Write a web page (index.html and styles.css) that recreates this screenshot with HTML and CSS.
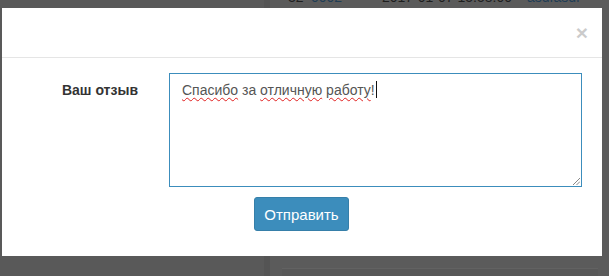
FILE: index.html
```html
<!DOCTYPE html>
<html lang="ru">
<head>
    <meta charset="UTF-8">
    <meta name="viewport" content="width=device-width, initial-scale=1.0">
    <title>Отзыв</title>
    <link rel="stylesheet" href="styles.css">
</head>
<body>
    <div class="page">
        <aside class="sidebar"></aside>
        <div class="divider"></div>
        <main class="content">
            <div class="table-row">
                <span class="cell num">32</span>
                <span class="cell link">0002</span>
                <span class="cell date">2017-01-07 15:58:00</span>
                <span class="cell link">asdfasdf</span>
            </div>
            <div class="panel"></div>
        </main>
    </div>

    <div class="modal">
        <div class="modal-header">
            <button class="close" type="button">&times;</button>
        </div>
        <form class="modal-body">
            <label class="form-label">Ваш отзыв</label>
            <div class="field">
                <div class="textarea"><span class="typo">Спасибо</span> за <span class="typo">отличную</span> <span class="typo">работу</span>!<span class="caret"></span>
                    <svg class="resize" width="7" height="7" viewBox="0 0 7 7">
                        <line x1="0" y1="7" x2="7" y2="0" stroke="#888" stroke-width="1"/>
                        <line x1="3.5" y1="7" x2="7" y2="3.5" stroke="#888" stroke-width="1"/>
                    </svg>
                </div>
                <button class="btn-primary" type="button">Отправить</button>
            </div>
        </form>
    </div>
</body>
</html>
```

FILE: styles.css
```css
* {
    margin: 0;
    padding: 0;
    box-sizing: border-box;
}
body {
    font-family: "Liberation Sans", Arial, sans-serif;
    font-size: 14px;
    line-height: 20px;
    color: #333;
    background-color: #5a5a5a;
    overflow: hidden;
}
.page {
    display: grid;
    grid-template-columns: 264px 6px 1fr;
    height: 276px;
}
.sidebar {
    background-color: #595959;
}
.divider {
    background-color: #545454;
}
.content {
    background-color: #5b5b5b;
    display: flex;
    flex-direction: column;
    justify-content: space-between;
    padding: 0 11px 0 12px;
}
.table-row {
    display: flex;
    margin-top: -13px;
    padding-left: 6px;
    font-size: 14px;
    color: #1e1e1e;
}
.cell.num {
    width: 23px;
}
.cell.link {
    color: #1f3d55;
}
.cell.link:nth-child(2) {
    width: 71px;
}
.cell.date {
    width: 145px;
}
.panel {
    height: 8px;
    border-top: 1px solid #626262;
    background-color: #585858;
}
.modal {
    position: absolute;
    left: 2px;
    top: 8px;
    width: 600px;
    height: 248px;
    background-color: #fff;
}
.modal-header {
    height: 50px;
    border-bottom: 1px solid #e5e5e5;
    display: flex;
    justify-content: flex-end;
    align-items: center;
    padding: 0 14px 0 15px;
}
.close {
    background: none;
    border: none;
    font-family: "Liberation Sans", Arial, sans-serif;
    font-size: 21px;
    font-weight: bold;
    line-height: 1;
    color: #000;
    opacity: 0.2;
    margin-top: 0;
}
.modal-body {
    display: grid;
    grid-template-columns: 152px 413px;
    padding: 15px 20px 15px 15px;
}
.form-label {
    font-weight: bold;
    text-align: right;
    padding-top: 7px;
    padding-right: 31px;
}
.field {
    display: flex;
    flex-direction: column;
    align-items: flex-start;
    gap: 10px;
}
.textarea {
    position: relative;
    width: 413px;
    height: 114px;
    border: 1px solid #3c8dbc;
    padding: 6px 12px;
    color: #555;
    font-size: 14px;
    line-height: 20px;
}
.typo {
    text-decoration: underline wavy #e02020;
    text-decoration-thickness: 1px;
    text-underline-offset: 2px;
}
.caret {
    display: inline-block;
    width: 1px;
    height: 17px;
    background-color: #111;
    vertical-align: -3px;
    margin-left: 1px;
}
.resize {
    position: absolute;
    right: 1px;
    bottom: 1px;
}
.btn-primary {
    margin-left: 85px;
    width: 95px;
    height: 34px;
    background-color: #3c8dbc;
    border: 1px solid #367fa9;
    border-radius: 3px;
    color: #fff;
    font-family: "Liberation Sans", Arial, sans-serif;
    font-size: 15px;
    cursor: pointer;
}
```
